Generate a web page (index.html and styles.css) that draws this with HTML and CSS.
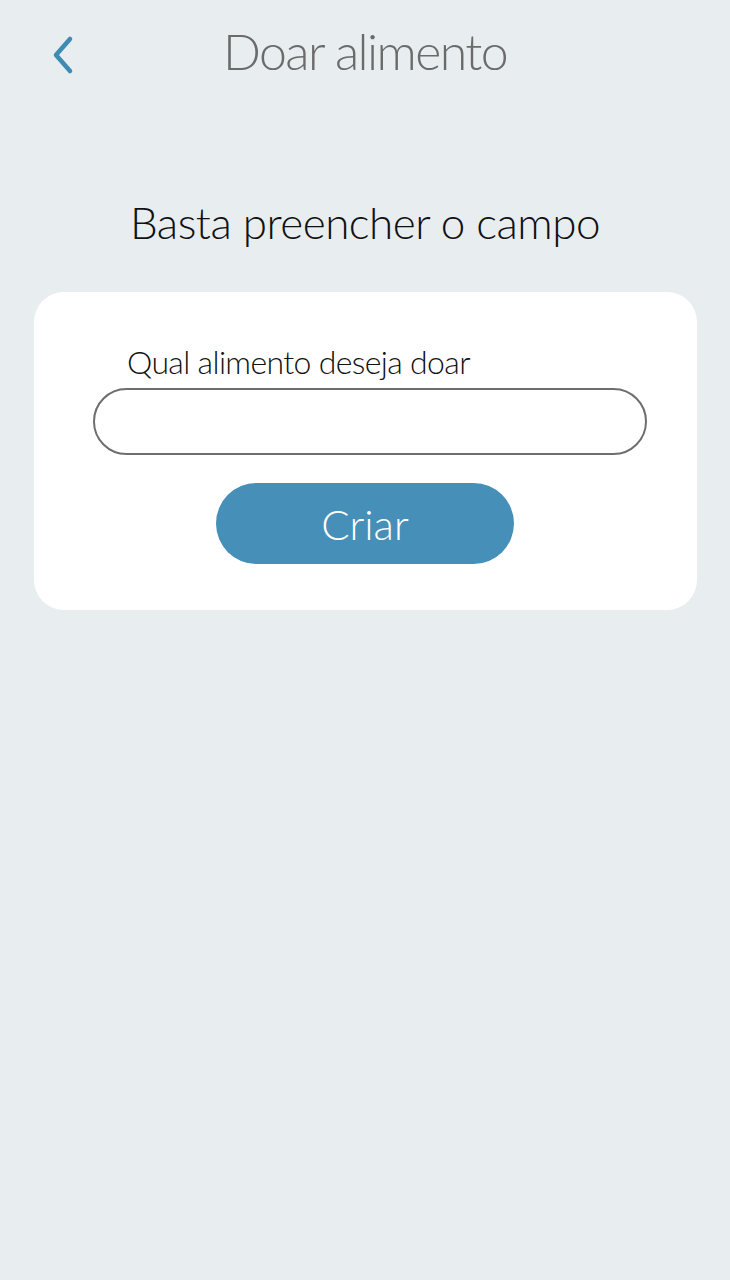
FILE: index.html
```html
<!DOCTYPE html>
<html lang="pt">
<head>
<meta charset="utf-8">
<title>Doar alimento</title>
<link rel="stylesheet" href="styles.css">
</head>
<body>
<header class="topbar">
  <button class="back" aria-label="Voltar">
    <svg width="24" height="40" viewBox="0 0 24 40"><path d="M19 4 L5 20 L19 36" fill="none" stroke="#3f8bb3" stroke-width="4.5" stroke-linecap="round" stroke-linejoin="round"/></svg>
  </button>
  <h1 class="title">Doar alimento</h1>
</header>
<main class="content">
  <h2 class="subtitle">Basta preencher o campo</h2>
  <section class="card">
    <label class="label" for="food">Qual alimento deseja doar</label>
    <input class="field" id="food" type="text">
    <button class="btn">Criar</button>
  </section>
</main>
</body>
</html>
```
FILE: styles.css
```css
html, body {
  margin: 0;
  padding: 0;
}
body {
  background: #e8edf0;
  font-family: Lato, "Open Sans", sans-serif;
  font-weight: 300;
  width: 730px;
  height: 1280px;
}
.topbar {
  position: relative;
  height: 106px;
  display: flex;
  align-items: center;
  justify-content: center;
}
.back {
  position: absolute;
  left: 51px;
  top: 35px;
  background: none;
  border: 0;
  padding: 0;
  width: 24px;
  height: 40px;
}
.back svg { display: block; }
.title {
  margin: 0;
  margin-top: -4px;
  font-weight: 300;
  font-size: 50px;
  letter-spacing: -1.6px;
  color: #6b6b6b;
}
.content {
  display: flex;
  flex-direction: column;
  align-items: center;
}
.subtitle {
  margin: 88px 0 0;
  font-weight: 300;
  font-size: 44px;
  letter-spacing: -0.5px;
  color: #111;
  line-height: 56px;
}
.card {
  margin-top: 42px;
  width: 663px;
  margin-left: 1px;
  box-sizing: border-box;
  background: #fff;
  border-radius: 30px;
  padding: 50px 50px 46px 59px;
  display: flex;
  flex-direction: column;
}
.label {
  margin-left: 34px;
  font-size: 32px;
  letter-spacing: -0.65px;
  color: #111;
  line-height: 40px;
}
.field {
  margin-top: 6px;
  height: 67px;
  box-sizing: border-box;
  border: 2px solid #6e6e6e;
  border-radius: 34px;
  background: #fff;
  font: inherit;
  padding: 0 24px;
}
.btn {
  align-self: center;
  margin-top: 28px;
  margin-left: -10px;
  width: 298px;
  height: 81px;
  border: 0;
  border-radius: 41px;
  background: #458fb8;
  color: #fff;
  font-family: Lato, sans-serif;
  font-weight: 300;
  font-size: 42px;
}
```
